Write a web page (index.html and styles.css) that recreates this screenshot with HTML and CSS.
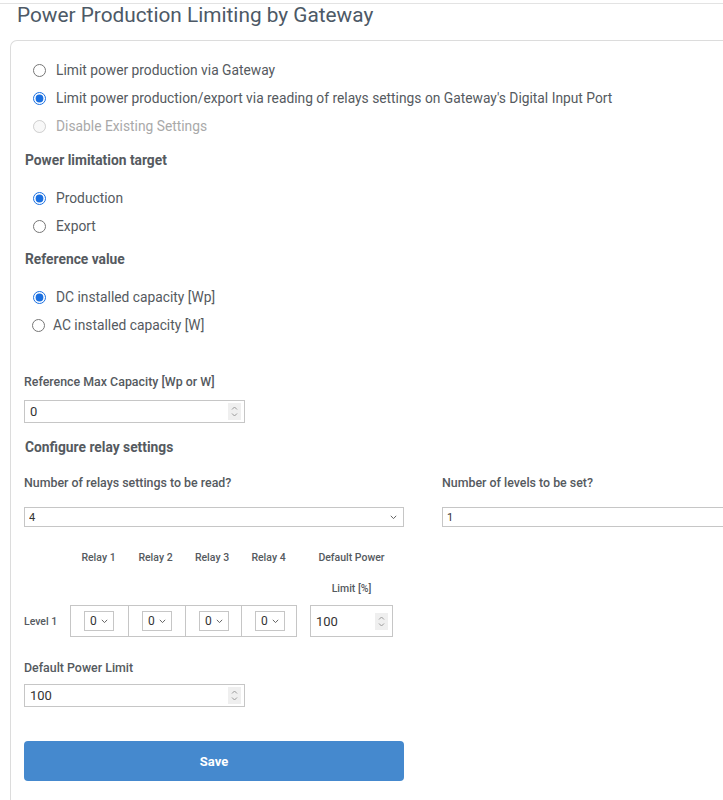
FILE: index.html
```html
<!DOCTYPE html>
<html>
<head>
  <title>Power Production Limiting by Gateway</title>
  <link rel="stylesheet" href="styles.css">
</head>
<body>
  <div class="top-line"></div>
  <h1 class="page-title">Power Production Limiting by Gateway</h1>

  <div class="card">
    <div class="radio-group first">
      <label class="radio-row">
        <input type="radio" name="limit-mode" value="gateway">
        Limit power production via Gateway
      </label>
      <label class="radio-row">
        <input type="radio" name="limit-mode" value="relays" checked>
        Limit power production/export via reading of relays settings on Gateway's Digital Input Port
      </label>
      <label class="radio-row disabled">
        <input type="radio" name="limit-mode" value="disable" disabled>
        Disable Existing Settings
      </label>
    </div>

    <h2 class="section-title">Power limitation target</h2>
    <div class="radio-group">
      <label class="radio-row">
        <input type="radio" name="target" value="production" checked>
        Production
      </label>
      <label class="radio-row">
        <input type="radio" name="target" value="export">
        Export
      </label>
    </div>

    <h2 class="section-title ref-title">Reference value</h2>
    <div class="radio-group">
      <label class="radio-row">
        <input type="radio" name="reference" value="dc" checked>
        DC installed capacity [Wp]
      </label>
      <label class="radio-row tight">
        <input type="radio" name="reference" value="ac">
        AC installed capacity [W]
      </label>
    </div>

    <label class="field-label max-cap">Reference Max Capacity [Wp or W]</label>
    <div class="num-field">
      <input type="text" value="0">
      <span class="spin">
        <svg width="13" height="17" viewBox="0 0 13 17"><path d="M4 6.5 L6.5 4 L9 6.5 M4 10.5 L6.5 13 L9 10.5" fill="none" stroke="#9a9a9a" stroke-width="1"/></svg>
      </span>
    </div>

    <h2 class="section-title relay-title">Configure relay settings</h2>

    <div class="two-cols">
      <div class="col">
        <label class="field-label">Number of relays settings to be read?</label>
        <div class="select-box wide">
          <select>
            <option>1</option>
            <option>2</option>
            <option>3</option>
            <option selected>4</option>
          </select>
          <svg class="chevron" width="7" height="5" viewBox="0 0 7 5"><path d="M0.8 0.8 L3.5 3.6 L6.2 0.8" fill="none" stroke="#666" stroke-width="1"/></svg>
        </div>
      </div>
      <div class="col levels">
        <label class="field-label">Number of levels to be set?</label>
        <input class="plain-input" type="text" value="1">
      </div>
    </div>

    <div class="relay-table">
      <div class="relay-head">
        <div></div>
        <div>Relay 1</div>
        <div>Relay 2</div>
        <div>Relay 3</div>
        <div>Relay 4</div>
        <div class="gap"></div>
        <div>Default Power Limit [%]</div>
      </div>
      <div class="relay-row">
        <div class="level-label">Level 1</div>
        <div class="relay-cells">
          <div class="relay-cell">
            <div class="select-box small">
              <select><option selected>0</option><option>1</option></select>
              <svg class="chevron" width="7" height="5" viewBox="0 0 7 5"><path d="M0.8 0.8 L3.5 3.6 L6.2 0.8" fill="none" stroke="#666" stroke-width="1"/></svg>
            </div>
          </div>
          <div class="relay-cell">
            <div class="select-box small">
              <select><option selected>0</option><option>1</option></select>
              <svg class="chevron" width="7" height="5" viewBox="0 0 7 5"><path d="M0.8 0.8 L3.5 3.6 L6.2 0.8" fill="none" stroke="#666" stroke-width="1"/></svg>
            </div>
          </div>
          <div class="relay-cell">
            <div class="select-box small">
              <select><option selected>0</option><option>1</option></select>
              <svg class="chevron" width="7" height="5" viewBox="0 0 7 5"><path d="M0.8 0.8 L3.5 3.6 L6.2 0.8" fill="none" stroke="#666" stroke-width="1"/></svg>
            </div>
          </div>
          <div class="relay-cell">
            <div class="select-box small">
              <select><option selected>0</option><option>1</option></select>
              <svg class="chevron" width="7" height="5" viewBox="0 0 7 5"><path d="M0.8 0.8 L3.5 3.6 L6.2 0.8" fill="none" stroke="#666" stroke-width="1"/></svg>
            </div>
          </div>
        </div>
        <div class="num-field level-limit">
          <input type="text" value="100">
          <span class="spin">
            <svg width="13" height="17" viewBox="0 0 13 17"><path d="M4 6.5 L6.5 4 L9 6.5 M4 10.5 L6.5 13 L9 10.5" fill="none" stroke="#9a9a9a" stroke-width="1"/></svg>
          </span>
        </div>
      </div>
    </div>

    <label class="field-label default-limit">Default Power Limit</label>
    <div class="num-field">
      <input type="text" value="100">
      <span class="spin">
        <svg width="13" height="17" viewBox="0 0 13 17"><path d="M4 6.5 L6.5 4 L9 6.5 M4 10.5 L6.5 13 L9 10.5" fill="none" stroke="#9a9a9a" stroke-width="1"/></svg>
      </span>
    </div>

    <button class="save-button">Save</button>
  </div>
</body>
</html>
```

FILE: styles.css
```css
html, body {
  margin: 0;
  padding: 0;
}

body {
  font-family: Roboto, "Liberation Sans", sans-serif;
  color: #555a60;
  background-color: #fff;
}

.top-line {
  height: 3px;
  border-bottom: 1px solid #e3e3e3;
}

.page-title {
  margin: 0;
  padding-left: 17px;
  font-size: 20.8px;
  font-weight: 400;
  line-height: 22px;
  color: #4d5966;
}

.card {
  margin-top: 14px;
  margin-left: 10px;
  padding-left: 13px;
  padding-bottom: 20px;
  border: 1px solid #dcdcdc;
  border-right: none;
  border-bottom: none;
  border-top-left-radius: 7px;
  min-height: 740px;
}

.radio-group {
  margin-top: 14px;
}

.radio-group.first {
  margin-top: 15px;
}

.radio-row {
  display: flex;
  align-items: center;
  height: 28px;
  padding-left: 9px;
  gap: 10px;
  font-size: 13.8px;
  color: #555a60;
}

.radio-row input {
  margin: 0;
  width: 13px;
  height: 13px;
  accent-color: #1a6fe0;
}

.radio-row.tight {
  padding-left: 8px;
  gap: 8px;
}

.radio-row.disabled {
  color: #a9a9a9;
}

.section-title {
  margin: 10px 0 0 1px;
  font-size: 13.8px;
  font-weight: 700;
  line-height: 20px;
  color: #555a60;
}

.ref-title {
  margin-top: 9px;
}

.relay-title {
  margin-top: 14px;
}

.field-label {
  display: block;
  font-size: 12.4px;
  font-weight: 500;
  line-height: 16px;
  color: #555a60;
  margin-bottom: 16px;
}

.max-cap {
  margin-top: 35px;
  margin-bottom: 10px;
}

.default-limit {
  margin-top: 23px;
  margin-bottom: 8px;
}

.num-field {
  display: flex;
  align-items: center;
  width: 221px;
  height: 23px;
  box-sizing: border-box;
  border: 1px solid #c6c6c6;
  padding-right: 3px;
}

.num-field input {
  flex-grow: 1;
  min-width: 0;
  border: none;
  outline: none;
  padding: 0 0 0 5px;
  font-family: Roboto, "Liberation Sans", sans-serif;
  font-size: 13px;
  color: #333;
  background: transparent;
}

.spin {
  display: flex;
  background-color: #efefef;
}

.two-cols {
  display: flex;
  gap: 38px;
  margin-top: 18px;
}

.col {
  width: 380px;
  flex-shrink: 0;
}

.col.levels {
  width: auto;
  flex-grow: 1;
  flex-shrink: 1;
  min-width: 0;
}

.select-box {
  position: relative;
}

.select-box select {
  appearance: none;
  -webkit-appearance: none;
  display: block;
  width: 100%;
  height: 20px;
  margin: 0;
  padding: 0 0 0 4px;
  border: 1px solid #c6c6c6;
  border-radius: 0;
  background-color: #fff;
  font-family: Roboto, "Liberation Sans", sans-serif;
  font-size: 11px;
  color: #333;
  outline: none;
}

.select-box .chevron {
  position: absolute;
  right: 7px;
  top: 8px;
  pointer-events: none;
}

.select-box.small {
  width: 30px;
}

.select-box.small select {
  font-size: 12px;
  padding-left: 5px;
}

.select-box.small .chevron {
  right: 6px;
}

.plain-input {
  display: block;
  width: 100%;
  height: 20px;
  box-sizing: border-box;
  margin: 0;
  padding: 0 0 0 4px;
  border: 1px solid #c6c6c6;
  border-right: none;
  font-family: Roboto, "Liberation Sans", sans-serif;
  font-size: 11px;
  color: #333;
  outline: none;
}

.relay-table {
  margin-top: 15px;
}

.relay-head,
.relay-row {
  display: grid;
  grid-template-columns: 46px 57px 57px 56px 57px 13px 83px;
}

.relay-head div {
  font-size: 10.5px;
  font-weight: 500;
  line-height: 31px;
  text-align: center;
  color: #555a60;
  padding: 0 6px;
}

.relay-head div:first-child,
.relay-head .gap {
  padding: 0;
}

.relay-row {
  height: 32px;
  margin-top: 1px;
}

.level-label {
  display: flex;
  align-items: center;
  font-size: 10.5px;
  font-weight: 500;
  color: #555a60;
}

.relay-cells {
  grid-column: 2 / 6;
  display: grid;
  grid-template-columns: 57px 57px 56px 57px;
  border: 1px solid #c6c6c6;
  box-sizing: border-box;
}

.relay-cell {
  display: flex;
  align-items: center;
  padding-left: 13px;
  border-left: 1px solid #c6c6c6;
}

.relay-cell:first-child {
  border-left: none;
}

.num-field.level-limit {
  grid-column: 7;
  width: 83px;
  height: 32px;
  padding-right: 4px;
}

.save-button {
  display: block;
  margin-top: 34px;
  width: 380px;
  height: 40px;
  border: none;
  border-radius: 4px;
  background-color: #4589ce;
  color: #fff;
  font-family: Roboto, "Liberation Sans", sans-serif;
  font-size: 13px;
  font-weight: 700;
}
```
